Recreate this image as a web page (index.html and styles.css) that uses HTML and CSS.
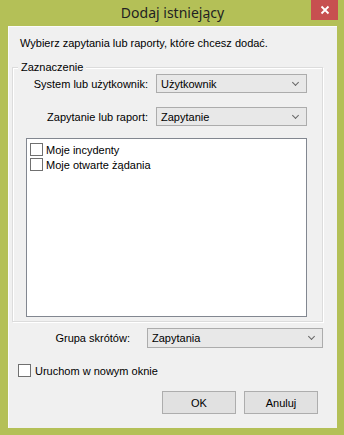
FILE: index.html
```html
<!DOCTYPE html>
<html lang="pl">
  <head>
    <meta charset="UTF-8" />
    <meta name="viewport" content="width=device-width, initial-scale=1.0" />
    <title>Dodaj istniejący</title>
    <link rel="stylesheet" href="styles.css">
  </head>
  <body>
    <div class="window">
      <div class="titlebar">
        <span class="title">Dodaj istniejący</span>
        <span class="close-btn">
          <svg width="10" height="10" viewBox="0 0 10 10">
            <path d="M1.5 1.5 L8.5 8.5 M8.5 1.5 L1.5 8.5" stroke="#fff" stroke-width="1.8" />
          </svg>
        </span>
      </div>

      <div class="client">
        <p class="intro">Wybierz zapytania lub raporty, które chcesz dodać.</p>

        <div class="group">
          <span class="group-title">Zaznaczenie</span>
          <div class="form-row">
            <label class="row-label">System lub użytkownik:</label>
            <div class="combo"><span>Użytkownik</span><i class="chevron"></i></div>
          </div>
          <div class="form-row">
            <label class="row-label">Zapytanie lub raport:</label>
            <div class="combo"><span>Zapytanie</span><i class="chevron"></i></div>
          </div>
          <div class="listbox">
            <div class="list-item"><span class="check"></span>Moje incydenty</div>
            <div class="list-item"><span class="check"></span>Moje otwarte żądania</div>
          </div>
        </div>

        <div class="shortcut-row">
          <label class="row-label">Grupa skrótów:</label>
          <div class="combo wide"><span>Zapytania</span><i class="chevron"></i></div>
        </div>

        <div class="newwin-row"><span class="check"></span>Uruchom w nowym oknie</div>

        <div class="buttons">
          <button class="btn">OK</button>
          <button class="btn">Anuluj</button>
        </div>
      </div>
    </div>
  </body>
</html>
```

FILE: styles.css
```css
body {
  margin: 0;
  font-family: "Liberation Sans", Arial, sans-serif;
  font-size: 11px;
  color: #000;
}

.window {
  width: 344px;
  height: 435px;
  box-sizing: border-box;
  background: #b4c057;
  padding: 0 7px 7px 8px;
  display: flex;
  flex-direction: column;
}

.titlebar {
  height: 26px;
  position: relative;
  display: flex;
  align-items: center;
  justify-content: center;
}

.title {
  font-family: "Noto Sans", sans-serif;
  font-size: 14px;
  color: #222;
  margin-top: -1px;
}

.close-btn {
  position: absolute;
  top: 0;
  right: -1px;
  width: 27px;
  height: 20px;
  background: #c75050;
  display: flex;
  align-items: center;
  justify-content: center;
}

.client {
  flex: 1;
  background: #f0f0f0;
  box-shadow: inset 1px 1px 0 #fbfbfb;
  display: flex;
  flex-direction: column;
  white-space: nowrap;
}

.intro {
  margin: 9px 0 0 12px;
  line-height: 16px;
}

/* group box with caption sitting on the top border */
.group {
  position: relative;
  margin: 16px 14px 0 4px;
  padding: 6px 0 4px 5px;
  border: 1px solid #dcdcdc;
  box-shadow: inset 1px 1px 0 #fff, 1px 1px 0 #fff;
}

.group-title {
  position: absolute;
  top: -9px;
  left: 5px;
  padding: 0 3px;
  line-height: 16px;
  background: #f0f0f0;
}

.form-row {
  display: grid;
  grid-template-columns: 130px 151px;
  column-gap: 8px;
  align-items: center;
  margin-bottom: 14px;
}

.row-label {
  text-align: right;
}

.combo {
  height: 19px;
  box-sizing: border-box;
  border: 1px solid #acacac;
  background: #e8e8e8;
  display: flex;
  align-items: center;
  justify-content: space-between;
  padding: 0 8px 0 4px;
}

.combo.wide {
  height: 20px;
}

.chevron {
  width: 4px;
  height: 4px;
  border-right: 1.5px solid #666;
  border-bottom: 1.5px solid #666;
  transform: rotate(45deg);
  margin-top: -3px;
}

.listbox {
  margin: -2px 0 0 8px;
  width: 281px;
  height: 179px;
  box-sizing: border-box;
  border: 1px solid #828790;
  background: #fff;
  padding: 3px 0 0 3px;
}

.list-item {
  display: flex;
  align-items: center;
  gap: 3px;
  height: 15px;
}

.check {
  width: 13px;
  height: 13px;
  box-sizing: border-box;
  border: 1px solid #707070;
  background: #fff;
  flex-shrink: 0;
}

.shortcut-row {
  display: grid;
  grid-template-columns: 122px 176px;
  column-gap: 17px;
  align-items: center;
  margin-top: 6px;
}

.newwin-row {
  display: flex;
  align-items: center;
  gap: 4px;
  margin: 16px 0 0 10px;
}

.buttons {
  display: flex;
  justify-content: flex-end;
  gap: 8px;
  margin: 14px 19px 0 0;
}

.btn {
  width: 74px;
  height: 23px;
  border: 1px solid #adadad;
  background: #e1e1e1;
  font-family: inherit;
  font-size: 11px;
  color: #000;
  padding: 0;
}
```
